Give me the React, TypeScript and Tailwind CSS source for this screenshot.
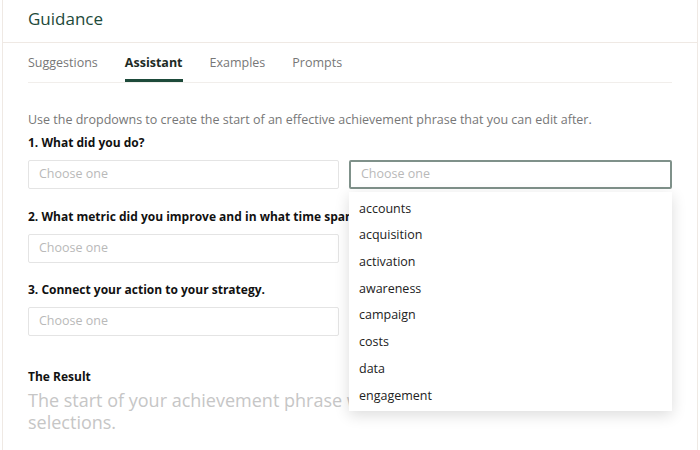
import { useState } from 'react';

const TABS = ['Suggestions', 'Assistant', 'Examples', 'Prompts'];

const ACTIONS = [
  'accounts',
  'acquisition',
  'activation',
  'awareness',
  'campaign',
  'costs',
  'data',
  'engagement',
];

// Plain select box with placeholder; `open` draws the focused state + option list
function ChooseBox({ open = false, options = [] as string[] }) {
  return (
    <div className="relative">
      <div
        className={
          open
            ? 'flex h-[29px] items-center rounded-[2px] border-2 border-[#7f918a] px-[10px] text-[12.5px] text-[#b9b9b9]'
            : 'flex h-[29px] items-center rounded-[2px] border border-[#e4e4e4] px-[10px] text-[12.5px] text-[#b9b9b9]'
        }
      >
        Choose one
      </div>
      {open && (
        <ul className="absolute left-0 right-0 top-[32px] z-10 bg-white pb-[2px] pt-[4px] shadow-[0_4px_14px_rgba(0,0,0,0.14)]">
          {options.map((o) => (
            <li key={o} className="flex h-[26.7px] items-center px-[10px] text-[12.5px] text-[#222]">
              {o}
            </li>
          ))}
        </ul>
      )}
    </div>
  );
}

export default function App() {
  const [tab] = useState('Assistant');

  return (
    <div className="h-[450px] w-[700px] overflow-hidden bg-white font-['Open_Sans',sans-serif]">
      <div className="mx-[2px] h-full border-x border-[#efe9e4]">
        {/* Header */}
        <div className="flex h-[43px] items-center border-b border-[#efe9e4] px-[25px] pb-[4px]">
          <h1 className="text-[17px] text-[#1d4a3a]">Guidance</h1>
        </div>

        <div className="px-[25px]">
          {/* Tabs */}
          <div className="flex h-[40px] gap-[27px] border-b border-[#f1eeeb]">
            {TABS.map((t) => (
              <div
                key={t}
                className={
                  t === tab
                    ? 'flex items-center border-b-[3px] border-[#1d4a3a] pt-[5px] text-[12.5px] font-bold text-[#1d2b25]'
                    : 'flex items-center pt-[2px] text-[12.5px] text-[#777]'
                }
              >
                {t}
              </div>
            ))}
          </div>

          <p className="mt-[28px] text-[12.5px] text-[#777]">
            Use the dropdowns to create the start of an effective achievement phrase that you can edit after.
          </p>

          <h3 className="mt-[4px] text-[12px] font-bold text-[#111]">1. What did you do?</h3>
          <div className="mt-[8px] grid grid-cols-[311px_1fr] gap-[10px]">
            <ChooseBox />
            <ChooseBox open options={ACTIONS} />
          </div>

          <h3 className="mt-[19px] text-[12px] font-bold text-[#111]">
            2. What metric did you improve and in what time span?
          </h3>
          <div className="mt-[8px] grid grid-cols-[311px_1fr] gap-[10px]">
            <ChooseBox />
            <ChooseBox />
          </div>

          <h3 className="mt-[18px] text-[12px] font-bold text-[#111]">3. Connect your action to your strategy.</h3>
          <div className="mt-[8px] grid grid-cols-[311px_1fr] gap-[10px]">
            <ChooseBox />
            <ChooseBox />
          </div>

          <h3 className="mt-[32px] text-[12px] font-bold text-[#111]">The Result</h3>
          <p className="mt-[3px] text-[18px] leading-[22px] text-[#c6c6c6]">
            The start of your achievement phrase will appear here based on your selections.
          </p>
        </div>
      </div>
    </div>
  );
}
